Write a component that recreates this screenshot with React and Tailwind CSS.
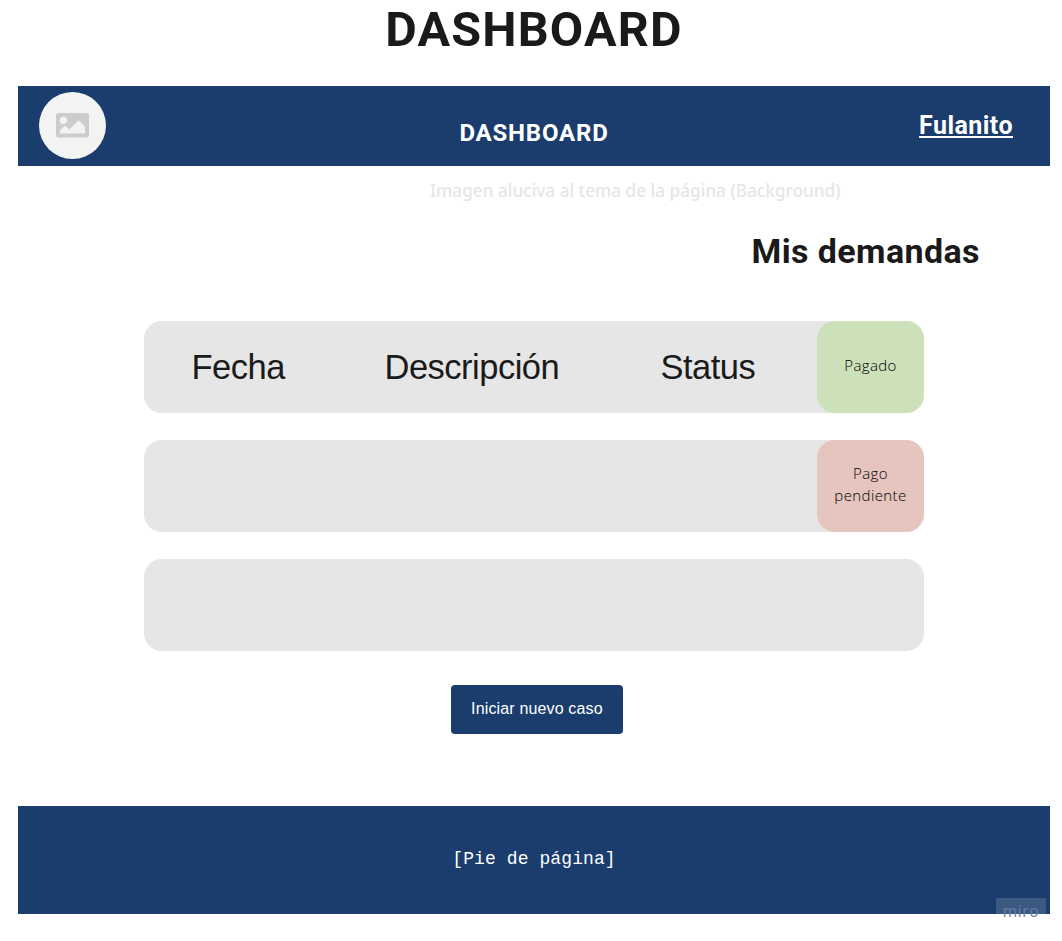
import React from "react";

function Avatar() {
  return (
    <div className="flex h-[67px] w-[67px] items-center justify-center rounded-full bg-[#f3f3f3]">
      <svg width="33" height="25" viewBox="0 0 33 25" className="block">
        <rect width="33" height="24.5" rx="2.5" fill="#cccccc" />
        <circle cx="7.4" cy="7.3" r="3.6" fill="#f3f3f3" />
        <path d="M4 20.5V17.2L9.2 12.4L13.3 16.5L22.6 7.2L29 13.6V20.5Z" fill="#f3f3f3" />
      </svg>
    </div>
  );
}

function Card({ children, badge, badgeClass }) {
  return (
    <div className="flex h-[92px] w-[780px] rounded-[18px] bg-[#e6e6e6]">
      <div className="flex flex-1 pl-[47.5px] pt-[26px] font-['Liberation_Sans',sans-serif] text-[34.5px] leading-[40px] tracking-[-0.5px] text-[#1a1a1a]">
        {children}
      </div>
      {badge && (
        <div
          className={`flex w-[107px] items-center justify-center rounded-[18px] pb-[4px] text-center font-['Open_Sans',sans-serif] text-[15px] leading-[22px] font-light tracking-[0.4px] text-black ${badgeClass}`}
        >
          {badge}
        </div>
      )}
    </div>
  );
}

export default function App() {
  return (
    <div className="h-[941px] w-[1062px] overflow-hidden bg-white px-[18px] pr-[12px] font-['Roboto',sans-serif]">
      <h1 className="h-[86px] pt-[2px] text-center text-[48.5px] leading-[56px] font-bold tracking-[1.2px] text-[#1a1a1a]">
        DASHBOARD
      </h1>
      <header className="grid h-[80px] grid-cols-3 bg-[#1b3d6d] text-[24px] leading-[28px] font-bold text-white">
        <div className="pl-[21px] pt-[6px]">
          <Avatar />
        </div>
        <div className="pt-[33px] text-center tracking-[0.8px]">DASHBOARD</div>
        <div className="pr-[37px] pt-[26px] text-right text-[25px] tracking-[0.45px]">
          <a className="underline decoration-2 underline-offset-[2px]">Fulanito</a>
        </div>
      </header>
      <p className="h-[59px] pl-[412px] pt-[13px] font-['Noto_Sans',sans-serif] text-[17.2px] leading-[24px] font-medium whitespace-nowrap text-[#e6e6e6]">
        Imagen aluciva al tema de la página (Background)
      </p>
      <h2 className="h-[96px] pr-[70px] pt-[6px] text-right text-[34px] leading-[40px] font-bold tracking-[0.4px] text-[#1a1a1a]">
        Mis demandas
      </h2>
      <main className="flex flex-col gap-[27px] pl-[126px]">
        <Card badge="Pagado" badgeClass="bg-[#cce0b9]">
          <span className="w-[193px]">Fecha</span>
          <span className="w-[276px]">Descripción</span>
          <span>Status</span>
        </Card>
        <Card badge={<>Pago<br />pendiente</>} badgeClass="bg-[#e6c5bf]" />
        <Card />
      </main>
      <div className="h-[155px] pl-[432.5px] pt-[34.4px]">
        <button className="h-[49px] w-[172.8px] rounded-[4px] bg-[#1b3d6d] pb-[1px] font-['Liberation_Sans',sans-serif] text-[16px] leading-[20px] tracking-[0.15px] whitespace-nowrap text-white">
          Iniciar nuevo caso
        </button>
      </div>
      <footer className="relative flex h-[108px] items-center justify-center bg-[#1b3d6d] pb-[2px] font-['Liberation_Mono',monospace] text-[18px] leading-[24px] tracking-[0.1px] text-white">
        <span>[Pie de página]</span>
        <span className="absolute top-[92px] right-[4px] h-[24px] w-[50px] text-center font-['Open_Sans',sans-serif] text-[15.5px] leading-[26px] tracking-[0.6px] text-[#667da3]">
          <span className="block h-[16px] bg-white/15">miro</span>
        </span>
      </footer>
    </div>
  );
}
